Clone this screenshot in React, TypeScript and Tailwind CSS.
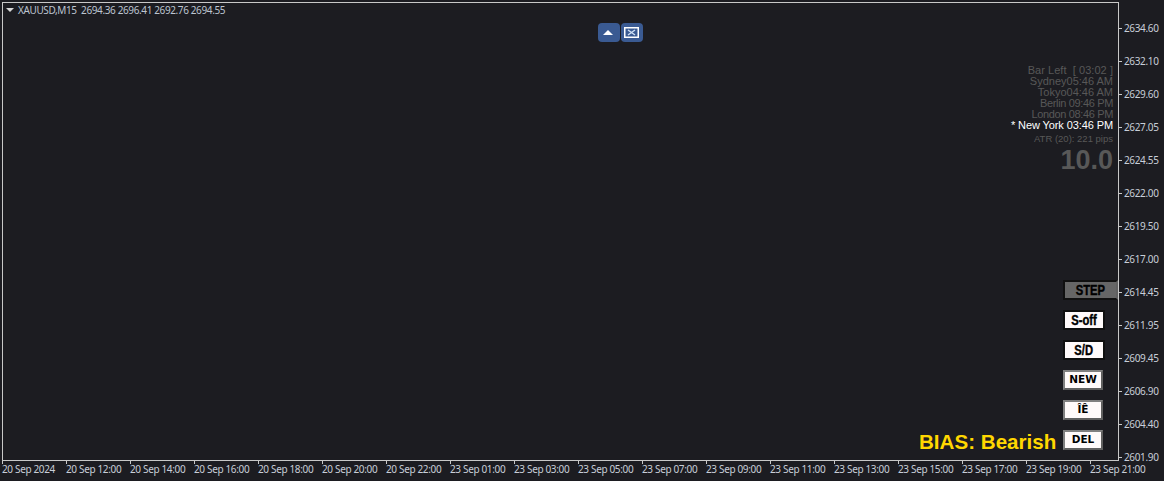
const prices = ['2634.60', '2632.10', '2629.60', '2627.05', '2624.55', '2622.00', '2619.50', '2617.00', '2614.45', '2611.95', '2609.45', '2606.90', '2604.40', '2601.90']

const times = ['20 Sep 2024', '20 Sep 12:00', '20 Sep 14:00', '20 Sep 16:00', '20 Sep 18:00', '20 Sep 20:00', '20 Sep 22:00', '23 Sep 01:00', '23 Sep 03:00', '23 Sep 05:00', '23 Sep 07:00', '23 Sep 09:00', '23 Sep 11:00', '23 Sep 13:00', '23 Sep 15:00', '23 Sep 17:00', '23 Sep 19:00', '23 Sep 21:00']

const sessions = [
  { label: 'Bar Left  [ 03:02 ]', color: 'text-[#585858] tracking-[0.05px]' },
  { label: 'Sydney05:46 AM', color: 'text-[#585858]' },
  { label: 'Tokyo04:46 AM', color: 'text-[#585858]' },
  { label: 'Berlin 09:46 PM', color: 'text-[#585858] tracking-[-0.35px]' },
  { label: 'London 08:46 PM', color: 'text-[#585858] tracking-[-0.35px]' },
  { label: '* New York 03:46 PM', color: 'text-white tracking-[-0.1px]' },
]

function NarrowButton({ label }: { label: string }) {
  return (
    <div className='flex h-5 w-[42px] items-center justify-center border-2 border-[#101010] bg-[#fffafa] font-["Liberation_Sans",sans-serif] text-[14px] font-bold text-black'>
      <span className="scale-x-[0.8] [-webkit-text-stroke:0.4px_black]">{label}</span>
    </div>
  )
}

function WideButton({ label }: { label: string }) {
  return (
    <div className='flex h-5 w-10 items-center justify-center border-2 border-t-[#808080] border-l-[#808080] border-r-[#606060] border-b-[#606060] bg-[#fffafa] font-["DejaVu_Sans",sans-serif] text-[10.5px] font-bold text-black'>
      {label}
    </div>
  )
}

export default function App() {
  return (
    <div className='flex h-[481px] w-[1164px] flex-col overflow-hidden bg-[#1c1c21] pl-0.5 pt-0.5 font-["Noto_Sans",sans-serif] text-[10px] tracking-[-0.35px] text-[#c8ced8]'>
      <div className="flex h-[458px]">
        {/* Chart area */}
        <div className="relative w-[1116px] border-t border-l border-[#c8c8c8]">
          <div className="flex h-3.5 items-center gap-1 pl-[3px] tracking-[-0.38px] text-[#bcc4d0]">
            <svg width="8" height="4" viewBox="0 0 8 4" className="shrink-0">
              <path d="M0 0h8L4 4z" fill="#d8d8d8" />
            </svg>
            <span className="whitespace-pre">XAUUSD,M15  2694.36 2696.41 2692.76 2694.55</span>
          </div>

          {/* Panel toggle buttons */}
          <div className="absolute left-[595px] top-[20px] flex gap-px">
            <div className="flex h-[19px] w-[22px] items-center justify-center rounded-sm bg-[#3a5a92] pr-0.5">
              <svg width="10" height="5" viewBox="0 0 10 5">
                <path d="M5 0l5 5H0z" fill="#ffffff" />
              </svg>
            </div>
            <div className="flex h-[19px] w-[22px] items-center justify-center rounded-sm bg-[#3a5a92] pr-0.5">
              <svg width="15" height="11" viewBox="0 0 15 11">
                <rect x="0.75" y="0.75" width="13.5" height="9.5" fill="none" stroke="#ffffff" strokeWidth="1.5" />
                <path d="M4 3l7 5M11 3l-7 5" stroke="#cfe0f5" strokeWidth="1.5" />
              </svg>
            </div>
          </div>

          {/* Session clocks */}
          <div className='absolute right-[5px] top-[62px] flex flex-col items-end font-["Liberation_Sans",sans-serif] text-[11px] leading-[11px] tracking-normal'>
            {sessions.map(s => (
              <div key={s.label} className={`whitespace-pre ${s.color}`}>
                {s.label}
              </div>
            ))}
            <div className="mt-0.5 text-[9.5px] text-[#585858]">ATR (20): 221 pips</div>
            <div className="mt-1 text-[27px] font-bold leading-[24px] text-[#585858]">10.0</div>
          </div>

          {/* Trade panel */}
          <div className="absolute right-0 top-[277px] flex h-5 w-[55px] items-center justify-center border-2 border-t-[#101010] border-l-[#101010] border-r-[#606060] border-b-[#101010] bg-[#666666] font-['Liberation_Sans',sans-serif] text-[14px] font-bold tracking-normal text-black">
            <span className="scale-x-[0.8] [-webkit-text-stroke:0.4px_black]">STEP</span>
          </div>
          <div className="absolute left-[1060px] top-[307px] tracking-normal">
            <NarrowButton label="S-off" />
          </div>
          <div className="absolute left-[1060px] top-[337px] tracking-normal">
            <NarrowButton label="S/D" />
          </div>
          <div className="absolute left-[1060px] top-[367px] tracking-normal">
            <WideButton label="NEW" />
          </div>
          <div className="absolute left-[1060px] top-[397px] tracking-normal">
            <WideButton label="ÎÊ" />
          </div>
          <div className="absolute left-[1060px] top-[427px] tracking-normal">
            <WideButton label="DEL" />
          </div>
          <div className='absolute left-[916px] top-[427px] font-["Liberation_Sans",sans-serif] text-[20.6px] font-bold leading-[24px] tracking-normal text-[#ffd700]'>
            BIAS: Bearish
          </div>
        </div>

        {/* Price axis */}
        <div className="flex w-[46px] flex-col border-l border-[#c8c8c8] pt-[10px]">
          {prices.map(p => (
            <div key={p} className="flex h-[33px] shrink-0 items-center gap-0.5">
              <div className="h-px w-[3px] bg-[#c8c8c8]" />
              <span>{p}</span>
            </div>
          ))}
        </div>
      </div>

      {/* Time axis */}
      <div className="flex w-[1117px] border-t border-[#c8c8c8]">
        {times.map(t => (
          <div key={t} className="relative w-16 shrink-0 whitespace-nowrap pt-px">
            <div className="absolute left-0 top-0 h-[3px] w-px bg-[#c8c8c8]" />
            {t}
          </div>
        ))}
      </div>
    </div>
  )
}
